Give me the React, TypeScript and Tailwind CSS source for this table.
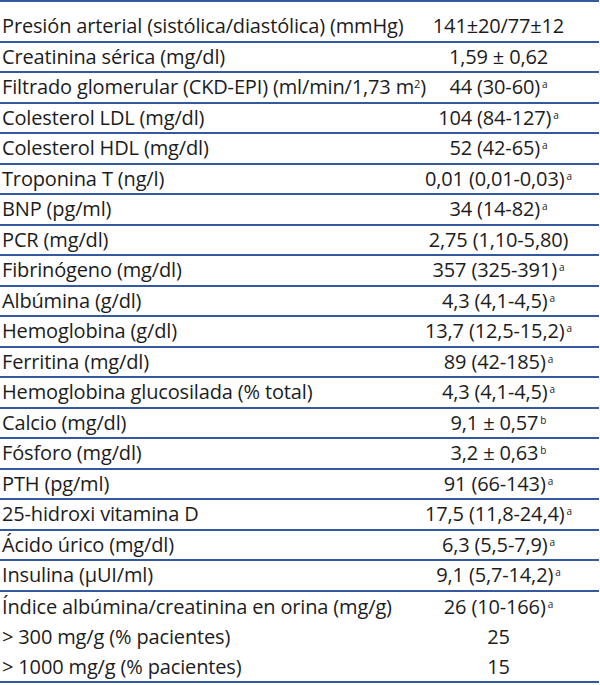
import React from "react";

type Row = { label: React.ReactNode; value: string; sup?: string; noBorder?: boolean };

const rows: Row[] = [
  { label: "Presión arterial (sistólica/diastólica) (mmHg)", value: "141±20/77±12" },
  { label: "Creatinina sérica (mg/dl)", value: "1,59 ± 0,62" },
  {
    label: (
      <>
        Filtrado glomerular (CKD-EPI) (ml/min/1,73 m<span className="relative -top-[6px] text-[11px]">2</span>)
      </>
    ),
    value: "44 (30-60)",
    sup: "a",
  },
  { label: "Colesterol LDL (mg/dl)", value: "104 (84-127)", sup: "a" },
  { label: "Colesterol HDL (mg/dl)", value: "52 (42-65)", sup: "a" },
  { label: "Troponina T (ng/l)", value: "0,01 (0,01-0,03)", sup: "a" },
  { label: "BNP (pg/ml)", value: "34 (14-82)", sup: "a" },
  { label: "PCR (mg/dl)", value: "2,75 (1,10-5,80)" },
  { label: "Fibrinógeno (mg/dl)", value: "357 (325-391)", sup: "a" },
  { label: "Albúmina (g/dl)", value: "4,3 (4,1-4,5)", sup: "a" },
  { label: "Hemoglobina (g/dl)", value: "13,7 (12,5-15,2)", sup: "a" },
  { label: "Ferritina (mg/dl)", value: "89 (42-185)", sup: "a" },
  { label: "Hemoglobina glucosilada (% total)", value: "4,3 (4,1-4,5)", sup: "a" },
  { label: "Calcio (mg/dl)", value: "9,1 ± 0,57", sup: "b" },
  { label: "Fósforo (mg/dl)", value: "3,2 ± 0,63", sup: "b" },
  { label: "PTH (pg/ml)", value: "91 (66-143)", sup: "a" },
  { label: "25-hidroxi vitamina D", value: "17,5 (11,8-24,4)", sup: "a" },
  { label: "Ácido úrico (mg/dl)", value: "6,3 (5,5-7,9)", sup: "a" },
  { label: "Insulina (µUI/ml)", value: "9,1 (5,7-14,2)", sup: "a" },
  { label: "Índice albúmina/creatinina en orina (mg/g)", value: "26 (10-166)", sup: "a", noBorder: true },
  { label: "> 300 mg/g (% pacientes)", value: "25", noBorder: true },
  { label: "> 1000 mg/g (% pacientes)", value: "15" },
];

function Sup({ s }: { s?: string }) {
  if (!s) return null;
  return <span className="relative -top-[6px] ml-[2px] text-[10px] tracking-normal">{s}</span>;
}

export default function App() {
  return (
    <div
      className="w-[600px] h-[685px] overflow-hidden bg-white text-[#1c1c1c]"
      style={{ fontFamily: '"Open Sans", "Noto Sans", sans-serif' }}
    >
      <div className="w-[599px] border-t-2 border-[#34599e] text-[20px] tracking-[-0.15px]">
        {rows.map((r, i) => (
          <div
            key={i}
            className={
              "flex items-center " +
              (i === 0 ? "h-[40.5px] pt-[10px] " : "h-[30.5px] ") +
              (r.noBorder ? "" : "border-b-2 border-[#34599e]")
            }
          >
            <div className="min-w-0 flex-1 whitespace-nowrap pl-[2px]">{r.label}</div>
            <div className="w-[214px] shrink-0 whitespace-nowrap pl-[13px] text-center">
              {r.value}
              <Sup s={r.sup} />
            </div>
          </div>
        ))}
      </div>
    </div>
  );
}
